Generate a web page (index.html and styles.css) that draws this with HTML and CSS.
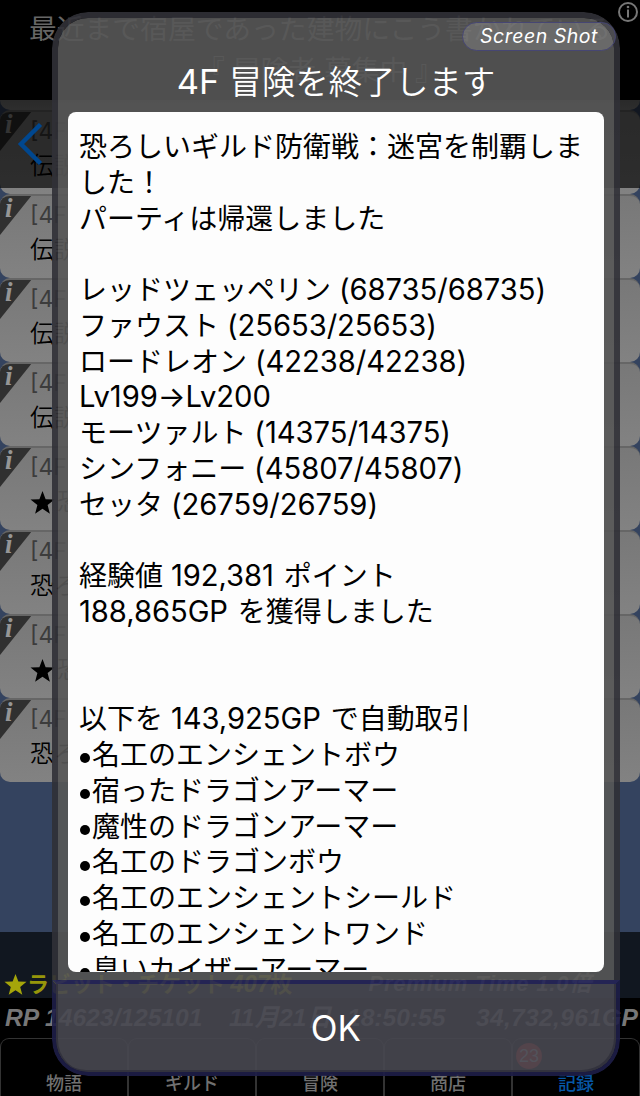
FILE: index.html
```html
<!DOCTYPE html>
<html lang="ja">
<head>
<meta charset="utf-8">
<title>冒険の記録</title>
<link rel="stylesheet" href="styles.css">
</head>
<body>
<div class="app">
  <header class="notice">
    <p>最近まで宿屋であった建物にこう書かれている</p>
    <p>『 冒険者 募集中 』</p>
    <svg class="info" viewBox="0 0 22 22"><circle cx="11" cy="11" r="9"/><path d="M11 8.500v8"/><circle class="dot" cx="11" cy="6" r="1.300"/></svg>
  </header>
  <main class="log">
    <div class="row stub"></div>
    <div class="row"><i class="flag"><b>i</b></i><span class="floor">[4F]</span><span class="what">伝説</span></div>
    <div class="row"><i class="flag"><b>i</b></i><span class="floor">[4F]</span><span class="what">伝説</span></div>
    <div class="row"><i class="flag"><b>i</b></i><span class="floor">[4F]</span><span class="what">伝説</span></div>
    <div class="row"><i class="flag"><b>i</b></i><span class="floor">[4F]</span><span class="what">伝説</span></div>
    <div class="row"><i class="flag"><b>i</b></i><span class="floor">[4F]</span><span class="what"><svg class="star" viewBox="0 0 24 24"><path d="M12 1l3 7.800 8.500.4-6.600 5.300 2.200 8.200L12 18.100l-7.100 4.600 2.200-8.200L.5 9.200 9 8.800z"/></svg>恐</span></div>
    <div class="row"><i class="flag"><b>i</b></i><span class="floor">[4F]</span><span class="what">恐ろ</span></div>
    <div class="row"><i class="flag"><b>i</b></i><span class="floor">[4F]</span><span class="what"><svg class="star" viewBox="0 0 24 24"><path d="M12 1l3 7.800 8.500.4-6.600 5.300 2.200 8.200L12 18.100l-7.100 4.600 2.200-8.200L.5 9.200 9 8.800z"/></svg>恐</span></div>
    <div class="row"><i class="flag"><b>i</b></i><span class="floor">[4F]</span><span class="what">恐ろ</span></div>
    <div class="shade"><svg class="back" viewBox="0 0 26 42"><path d="M23.500 1.500L4 21l19.500 19.500"/></svg></div>
  </main>
  <section class="ticker">
    <span class="ticket"><svg class="star" viewBox="0 0 24 24"><path d="M12 1l3 7.800 8.500.4-6.600 5.300 2.200 8.200L12 18.100l-7.100 4.600 2.200-8.200L.5 9.200 9 8.800z"/></svg>ラビット・チケット <em>407</em>枚</span>
    <span class="premium">Premium Time 1.0倍</span>
  </section>
  <section class="stats"><span class="rp">RP 14623/125101</span><span class="date">11月21日</span><span class="time">18:50:55</span><span class="gold">34,732,961GP</span></section>
  <nav class="tabs">
    <span>物語</span><span>ギルド</span><span>冒険</span><span>商店</span><span class="on">記録<b class="badge">23</b></span>
  </nav>
</div>

<div class="dialog">
  <div class="upper">
    <span class="shot">Screen Shot</span>
    <h1><span class="lat">4F</span> 冒険を終了します</h1>
    <div class="report">
      <p>恐ろしいギルド防衛戦：迷宮を制覇しま</p>
      <p>した！</p>
      <p>パーティは帰還しました</p>
      <p></p>
      <p>レッドツェッペリン <span class="num">(68735/68735)</span></p>
      <p>ファウスト <span class="num">(25653/25653)</span></p>
      <p>ロードレオン <span class="num">(42238/42238)</span></p>
      <p><span class="num">Lv199→Lv200</span></p>
      <p>モーツァルト <span class="num">(14375/14375)</span></p>
      <p>シンフォニー <span class="num">(45807/45807)</span></p>
      <p>セッタ <span class="num">(26759/26759)</span></p>
      <p></p>
      <p>経験値 <span class="num">192,381</span> ポイント</p>
      <p><span class="num">188,865GP</span> を獲得しました</p>
      <p></p>
      <p></p>
      <p>以下を <span class="num">143,925GP</span> で自動取引</p>
      <p class="item">名工のエンシェントボウ</p>
      <p class="item">宿ったドラゴンアーマー</p>
      <p class="item">魔性のドラゴンアーマー</p>
      <p class="item">名工のドラゴンボウ</p>
      <p class="item">名工のエンシェントシールド</p>
      <p class="item">名工のエンシェントワンド</p>
      <p class="item">臭いカイザーアーマー</p>
    </div>
  </div>
  <div class="ok">OK</div>
</div>
</body>
</html>
```
FILE: styles.css
```css
* { box-sizing: border-box; }
body { margin: 0; width: 640px; height: 1096px; overflow: hidden; background: #000; position: relative; font-family: Inter, "Noto Sans CJK JP", sans-serif; }
p, h1 { margin: 0; font-weight: 400; }
.app { width: 640px; height: 1096px; display: flex; flex-direction: column; overflow: hidden; }

.notice { height: 100px; padding-top: 9px; background: #000; color: #666; text-align: center; font-size: 27.8px; font-weight: 350; line-height: 41px; white-space: nowrap; position: relative; }
.info { position: absolute; right: 1px; top: 1px; width: 22px; height: 22px; fill: none; stroke: #777; stroke-width: 2; }
.info .dot { fill: #777; stroke: none; }

.log { height: 832px; background: #34435f; position: relative; overflow: hidden; }
.row { height: 84px; border-top: 2px solid #666; border-radius: 10px; background: linear-gradient(#787878, #828282); position: relative; padding: 5px 0 0 30px; display: flex; flex-direction: column; overflow: hidden; white-space: nowrap; font-weight: 400; }
.row.stub { height: 10px; border: 0; border-radius: 0 0 10px 10px; padding: 0; }
.flag { position: absolute; left: 0; top: -1px; width: 32px; height: 40px; background: #303030; clip-path: polygon(0 0, 100% 0, 0 100%); }
.flag b { position: absolute; left: 5px; top: 0; font: italic bold 27px/26px "Liberation Serif", serif; color: #969696; }
.floor { font-size: 23px; line-height: 29px; color: #3c3c3c; font-weight: 400; }
.what { font-size: 24px; line-height: 40px; color: #000; font-weight: 350; display: flex; align-items: center; }
.what .star { width: 25px; height: 25px; flex: none; margin-right: 2px; }
.shade { position: absolute; left: 0; top: 0; width: 640px; height: 88px; background: rgba(0,0,0,.65); padding: 23px 0 0 17px; }
.back { width: 26px; height: 42px; fill: none; stroke: #00478f; stroke-width: 4.5; }

.ticker { height: 66px; background: #111720; position: relative; display: flex; align-items: flex-end; justify-content: space-between; padding: 0 48px 1px 4px; font-size: 22px; line-height: 26px; font-weight: 700; white-space: nowrap; }
.ticket { color: #96960a; display: flex; align-items: center; white-space: pre; }
.ticket em { font-family: "Liberation Sans", sans-serif; font-size: 24px; }
.ticket .star { width: 23px; height: 23px; fill: #a5a50a; }
.premium { font-family: "Liberation Sans", "Noto Sans CJK JP", sans-serif; font-style: italic; letter-spacing: .8px; color: #777; }
.stats { height: 40px; display: flex; align-items: center; font: italic bold 24.6px/40px "Liberation Sans", "Noto Sans CJK JP", sans-serif; color: #777; white-space: nowrap; padding-left: 5px; }
.rp { width: 224px; } .date { width: 118px; } .time { width: 129px; }
.gold { letter-spacing: .3px; }
.tabs { height: 58px; display: grid; grid-template-columns: repeat(5, 1fr); font: 500 18px/24px "Noto Sans CJK JP", sans-serif; color: #707070; }
.tabs span { border: 1px solid #333; border-bottom: 0; border-radius: 9px 9px 0 0; text-align: center; padding-top: 31px; position: relative; }
.tabs .on { color: #0757a5; }
.badge { position: absolute; left: 3px; top: 4px; width: 26px; height: 26px; border-radius: 50%; background: #c02018; color: #bbb; font: 18px/26px "Liberation Sans", sans-serif; }

.dialog { position: absolute; left: 52px; top: 12px; width: 568px; height: 1064px; display: flex; flex-direction: column; border-radius: 36px; overflow: hidden; }
.upper { height: 968px; border: 6px solid rgba(49,49,56,.91); border-bottom: 0; border-radius: 36px 36px 0 0; background: rgba(87,87,87,.91); background-clip: padding-box; padding: 0 10px; }
.shot { position: absolute; left: 410px; top: 10px; width: 154px; height: 29px; border: 1.5px solid #464673; border-radius: 15px; background: rgba(255,255,255,.15); color: #fff; font-size: 19.5px; line-height: 26px; font-style: italic; letter-spacing: .5px; text-align: center; }
h1 { height: 94px; padding-top: 40px; color: #fff; font-size: 33.3px; line-height: 48px; font-weight: 350; text-align: center; white-space: nowrap; }
h1 .lat { font-size: 34.5px; font-weight: 400; }
.report { width: 536px; height: 860px; border-radius: 8px; background: #fdfdfd; color: #000; padding: 18px 0 0 11px; overflow: hidden; font-size: 28px; font-weight: 350; }
.report p { height: 35.78px; line-height: 35.78px; white-space: nowrap; }
.num { font-size: 29.2px; font-weight: 400; line-height: 1; margin-right: 2px; letter-spacing: -.05px; }
.item { display: flex; align-items: center; }
.item::before { content: ""; width: 10px; height: 10px; margin: 5px 2px 0 1px; border-radius: 50%; background: #000; }
.ok { height: 96px; border: 4px solid rgba(31,31,72,.91); border-top-color: rgba(38,38,90,.92); border-radius: 0 0 36px 36px; background: rgba(71,71,80,.91); background-clip: padding-box; box-shadow: inset -2px -2px 0 rgba(49,49,60,.9), inset 2px 0 0 rgba(49,49,60,.9); color: #fff; font-size: 35px; line-height: 88px; text-align: center; font-weight: 400; }
```
